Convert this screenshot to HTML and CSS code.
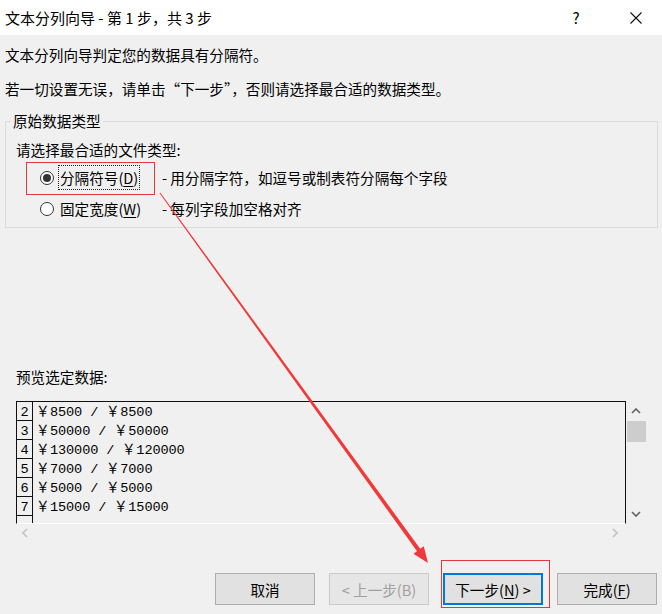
FILE: index.html
```html
<!DOCTYPE html>
<html lang="zh-CN">
<head>
<meta charset="utf-8">
<title>文本分列向导</title>
<link rel="stylesheet" href="styles.css">
</head>
<body>
<div class="dialog">
  <div class="titlebar">
    <span class="title">文本分列向导 - 第 1 步，共 3 步</span>
    <span class="tb-btns">
      <span class="help">?</span>
      <svg class="close" width="12" height="12" viewBox="0 0 12 12"><path d="M0.5 0.5 L11.5 11.5 M11.5 0.5 L0.5 11.5" stroke="#111" stroke-width="1.1" fill="none"/></svg>
    </span>
  </div>
  <div class="content">
    <p class="l1">文本分列向导判定您的数据具有分隔符。</p>
    <p class="l2">若一切设置无误，请单击“下一步”，否则请选择最合适的数据类型。</p>
    <fieldset class="group">
      <legend>原始数据类型</legend>
      <p class="prompt">请选择最合适的文件类型:</p>
      <div class="opt">
        <span class="radio checked"></span>
        <span class="lbl"><span class="focus">分隔符号(<u>D</u>)</span></span>
        <span class="desc">- 用分隔字符，如逗号或制表符分隔每个字段</span>
      </div>
      <div class="opt">
        <span class="radio"></span>
        <span class="lbl"><span class="nofocus">固定宽度(<u>W</u>)</span></span>
        <span class="desc">- 每列字段加空格对齐</span>
      </div>
    </fieldset>
    <p class="plabel">预览选定数据:</p>
    <div class="preview">
      <div class="pbox">
        <div class="prow"><span class="num">2</span><span class="data">￥8500 / ￥8500</span></div>
        <div class="prow"><span class="num">3</span><span class="data">￥50000 / ￥50000</span></div>
        <div class="prow"><span class="num">4</span><span class="data">￥130000 / ￥120000</span></div>
        <div class="prow"><span class="num">5</span><span class="data">￥7000 / ￥7000</span></div>
        <div class="prow"><span class="num">6</span><span class="data">￥5000 / ￥5000</span></div>
        <div class="prow"><span class="num">7</span><span class="data">￥15000 / ￥15000</span></div>
        <div class="prow"><span class="num"></span><span class="data"></span></div>
      </div>
      <div class="vscroll">
        <span class="sarrow"><svg width="10" height="6" viewBox="0 0 10 6"><path d="M1 5 L5 1 L9 5" stroke="#606060" stroke-width="1.6" fill="none"/></svg></span>
        <span class="thumb"></span>
        <span class="track"></span>
        <span class="sarrow"><svg width="10" height="6" viewBox="0 0 10 6"><path d="M1 1 L5 5 L9 1" stroke="#606060" stroke-width="1.6" fill="none"/></svg></span>
      </div>
      <div class="hscroll">
        <svg width="6" height="10" viewBox="0 0 6 10"><path d="M5 1 L1 5 L5 9" stroke="#c2c2c2" stroke-width="1.6" fill="none"/></svg>
        <svg width="6" height="10" viewBox="0 0 6 10"><path d="M1 1 L5 5 L1 9" stroke="#c2c2c2" stroke-width="1.6" fill="none"/></svg>
      </div>
      <div class="corner"></div>
    </div>
    <div class="buttons">
      <button class="btn">取消</button>
      <button class="btn disabled">&lt; 上一步(B)</button>
      <button class="btn default">下一步(<u>N</u>) &gt;</button>
      <button class="btn">完成(<u>F</u>)</button>
    </div>
  </div>
  <svg class="annot" width="662" height="614" viewBox="0 0 662 614">
    <rect x="26.5" y="162.5" width="128" height="32" fill="none" stroke="#e0393e" stroke-width="1"/>
    <rect x="441.5" y="560.5" width="108" height="47" fill="none" stroke="#e0393e" stroke-width="1"/>
    <polygon points="160.4,192.7 420.2,548.8 423.8,546.2 428,563 413.4,553.8 417,551.2 159.6,193.3" fill="#f03a3a"/>
  </svg>
</div>
</body>
</html>
```
FILE: styles.css
```css
* { box-sizing: border-box; }
html, body { margin: 0; padding: 0; }
body {
  background: #f0f0f0;
  font-family: "Noto Sans CJK SC", "Noto Sans", sans-serif;
  font-size: 14.6px;
  color: #000;
}
.dialog {
  position: relative;
  width: 662px;
  height: 614px;
  overflow: hidden;
  background: #f0f0f0;
}
.titlebar {
  height: 35px;
  background: #fff;
  display: flex;
  align-items: center;
  justify-content: space-between;
  padding-left: 5px;
}
.title { font-size: 15px; line-height: 20px; }
.tb-btns { display: flex; align-items: center; }
.help { font-size: 15px; width: 12px; margin-right: 48px; text-align: center; line-height: 20px; }
.close { margin-right: 20px; }
.content { padding: 0 5px; }
p { margin: 0; line-height: 20px; white-space: nowrap; }
.l1 { margin-top: 10px; }
.l2 { margin-top: 14px; }
.group {
  margin: 12px 0 0 0;
  padding: 0 0 6px 10px;
  width: 653px;
  border: 1px solid #dcdcdc;
  min-width: 0;
}
.group legend {
  padding: 0 2px;
  margin-left: -5px;
  line-height: 20px;
}
.prompt { margin-top: 9px; }
.opt {
  display: grid;
  grid-template-columns: 18px 104px auto;
  align-items: center;
  height: 25px;
  margin-top: 5px;
  margin-left: 24px;
}
.opt + .opt { margin-top: 6px; }
.radio {
  width: 14px;
  height: 14px;
  border: 1px solid #333;
  border-radius: 50%;
  background: #fff;
  display: flex;
  align-items: center;
  justify-content: center;
}
.radio.checked::after {
  content: "";
  width: 8px;
  height: 8px;
  border-radius: 50%;
  background: #333;
}
.focus, .nofocus {
  display: inline-block;
  line-height: 23px;
  padding: 0 1px;
  border: 1px dotted transparent;
}
.focus { border-color: #222; }
.desc { white-space: nowrap; }
u { text-decoration: underline; text-underline-offset: 2px; }
.plabel { margin-top: 139px; margin-left: 11px; }
.preview {
  margin-top: 14px;
  margin-left: 11px;
  display: grid;
  grid-template-columns: 610px 20px;
  grid-template-rows: 123px 18px;
}
.pbox {
  border: 1px solid #111;
  border-bottom-color: #fff;
  overflow: hidden;
  font-family: "Liberation Mono", monospace;
  font-size: 13.6px;
}
.prow {
  display: flex;
  height: 19px;
  line-height: 19px;
}
.num {
  width: 16px;
  flex: none;
  text-align: center;
  border-right: 1px solid #111;
  border-bottom: 1px solid #111;
  line-height: 18px;
  padding-top: 2px;
}
.data { padding-left: 3px; padding-top: 2px; line-height: 17px; white-space: pre; letter-spacing: -0.1px; }
.vscroll {
  display: flex;
  flex-direction: column;
  align-items: stretch;
}
.sarrow {
  height: 20px;
  display: flex;
  align-items: center;
  justify-content: center;
}
.thumb {
  height: 21px;
  margin-left: 1px;
  background: #cdcdcd;
}
.track { flex: 1; }
.hscroll {
  display: flex;
  justify-content: space-between;
  align-items: center;
  padding: 0 8px 0 6px;
}
.buttons {
  margin-top: 31px;
  display: flex;
  justify-content: flex-end;
  gap: 14px;
}
.btn {
  width: 100px;
  height: 32px;
  font-family: "Noto Sans CJK SC", "Noto Sans", sans-serif;
  font-size: 14.6px;
  color: #000;
  background: #e1e1e1;
  border: 1px solid #adadad;
  padding: 0;
}
.btn.disabled {
  color: #a0a0a0;
  background: #e6e6e6;
  border-color: #cacaca;
}
.btn.default { border: 2px solid #0078d7; }
.annot {
  position: absolute;
  left: 0;
  top: 0;
  pointer-events: none;
}
```
